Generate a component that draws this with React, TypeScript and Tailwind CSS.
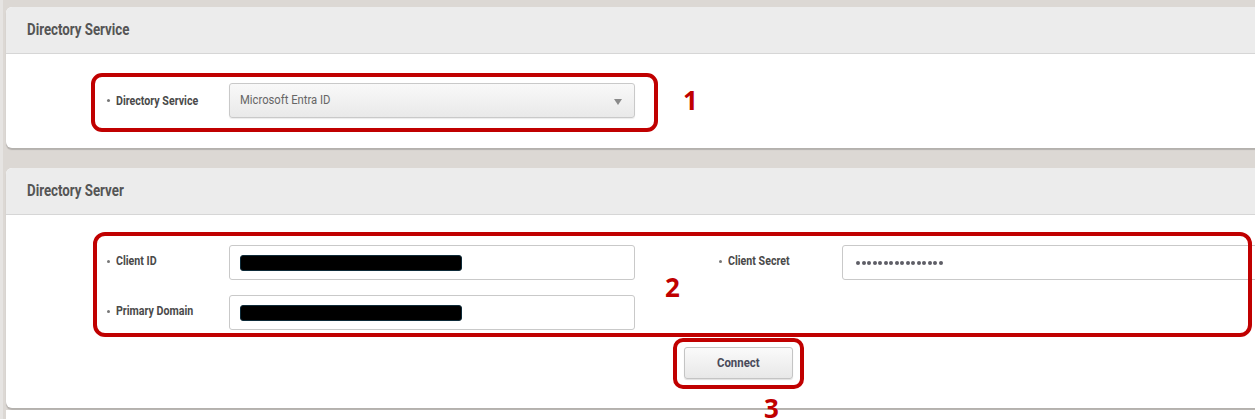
import React from "react";

const cond = { fontFamily: '"Roboto", "Liberation Sans", sans-serif' };

function Label({ text }: { text: string }) {
  return (
    <div className="flex items-center text-[#4a4a4a]" style={cond}>
      <span className="mr-[6px] h-[3px] w-[3px] rounded-full bg-[#777]" />
      <span className="inline-block origin-left scale-x-[0.82] text-[13px] font-bold whitespace-nowrap">{text}</span>
    </div>
  );
}

function Redacted() {
  return <div className="h-[16px] w-[222px] rounded-[3px] border border-[#0d2a38] bg-black" />;
}

function Dots() {
  return (
    <div className="flex gap-[1.5px]">
      {Array.from({ length: 16 }).map((_, i) => (
        <div key={i} className="h-[4px] w-[4px] rounded-full bg-[#5e5e66]" />
      ))}
    </div>
  );
}

function Title({ text }: { text: string }) {
  return (
    <span className="inline-block origin-left scale-x-[0.83] text-[16px] font-bold whitespace-nowrap text-[#555]" style={cond}>
      {text}
    </span>
  );
}

export default function App() {
  return (
    <div className="h-[419px] w-[1255px] overflow-hidden bg-[#dcd8d4]">
      <div className="flex h-full border-l-[3px] border-l-[#e6e4e2]">
        <div className="ml-[3px] flex w-[1260px] flex-col pt-[7px]">
          {/* Card 1 */}
          <div className="flex h-[141px] flex-col overflow-hidden rounded-l-[6px] bg-white shadow-[0_2px_1px_rgba(0,0,0,0.18)]">
            <div className="flex h-[47px] items-center border-b border-[#d6d6d6] bg-[#ececec] pl-[21px]">
              <Title text="Directory Service" />
            </div>
            <div className="relative flex-1">
              <div className="flex items-center pl-[101px] pt-[29px]">
                <div className="w-[122px]">
                  <Label text="Directory Service" />
                </div>
                <div className="relative flex h-[35px] w-[406px] items-center rounded-[3px] border border-[#c9c9c9] bg-gradient-to-b from-[#f9f9f9] to-[#e9e9e9] pl-[10px] shadow-[0_1px_1px_rgba(0,0,0,0.08)]">
                  <span className="inline-block origin-left scale-x-[0.9] text-[12.5px] text-[#666]" style={cond}>Microsoft Entra ID</span>
                  <span className="absolute right-[12px] top-[15px] h-0 w-0 border-x-[4px] border-t-[6px] border-x-transparent border-t-[#8a8a8a]" />
                </div>
              </div>
              {/* annotation 1 */}
              <div className="absolute left-[85px] top-[19px] h-[59px] w-[567px] rounded-[11px] border-[4px] border-[#c00000]" />
              <div className="absolute left-[677px] top-[33px] text-[26px] font-bold leading-none text-[#c00000]" style={{ fontFamily: '"Open Sans", sans-serif' }}>1</div>
            </div>
          </div>

          <div className="h-[20px] shrink-0" />

          {/* Card 2 */}
          <div className="flex h-[240px] flex-col rounded-l-[6px] bg-white shadow-[0_2px_1px_rgba(0,0,0,0.18)]">
            <div className="flex h-[47px] items-center rounded-tl-[6px] border-b border-[#d6d6d6] bg-[#ececec] pl-[21px]">
              <Title text="Directory Server" />
            </div>
            <div className="relative flex-1">
              <div className="flex pl-[101px] pt-[30px]">
                <div className="flex flex-col gap-[15px]">
                  <div className="flex items-center">
                    <div className="-mt-[3px] w-[122px]"><Label text="Client ID" /></div>
                    <div className="flex h-[35px] w-[406px] items-center rounded-[3px] border border-[#c9c9c9] bg-white pl-[10px]">
                      <Redacted />
                    </div>
                  </div>
                  <div className="flex items-center">
                    <div className="-mt-[3px] w-[122px]"><Label text="Primary Domain" /></div>
                    <div className="flex h-[35px] w-[406px] items-center rounded-[3px] border border-[#c9c9c9] bg-white pl-[10px]">
                      <Redacted />
                    </div>
                  </div>
                </div>
                <div className="ml-[84px] flex items-start">
                  <div className="flex items-center">
                    <div className="-mt-[3px] w-[123px]"><Label text="Client Secret" /></div>
                    <div className="flex h-[35px] w-[430px] items-center rounded-[3px] border border-[#c9c9c9] bg-white pl-[13px]">
                      <Dots />
                    </div>
                  </div>
                </div>
              </div>
              <div className="flex pl-[678px] pt-[17px]">
                <div className="flex h-[32px] w-[109px] items-center justify-center rounded-[3px] border border-[#c4c4c4] bg-gradient-to-b from-[#fafafa] to-[#e8e8e8] shadow-[0_1px_1px_rgba(0,0,0,0.12)]">
                  <span className="inline-block scale-x-[0.88] text-[13px] font-bold text-[#4a4a5a]" style={cond}>Connect</span>
                </div>
              </div>
              {/* annotation 2 */}
              <div className="absolute left-[87px] top-[17px] h-[105px] w-[1159px] rounded-[12px] border-[4px] border-[#c00000]" />
              <div className="absolute left-[659px] top-[59px] text-[26px] font-bold leading-none text-[#c00000]" style={{ fontFamily: '"Open Sans", sans-serif' }}>2</div>
              {/* annotation 3 */}
              <div className="absolute left-[667px] top-[123px] h-[51px] w-[131px] rounded-[10px] border-[4px] border-[#c00000]" />
              <div className="absolute left-[758px] top-[180px] text-[26px] font-bold leading-none text-[#c00000]" style={{ fontFamily: '"Open Sans", sans-serif' }}>3</div>
            </div>
          </div>
          <div className="mt-[2px] flex-1 bg-white" />
        </div>
      </div>
    </div>
  );
}
